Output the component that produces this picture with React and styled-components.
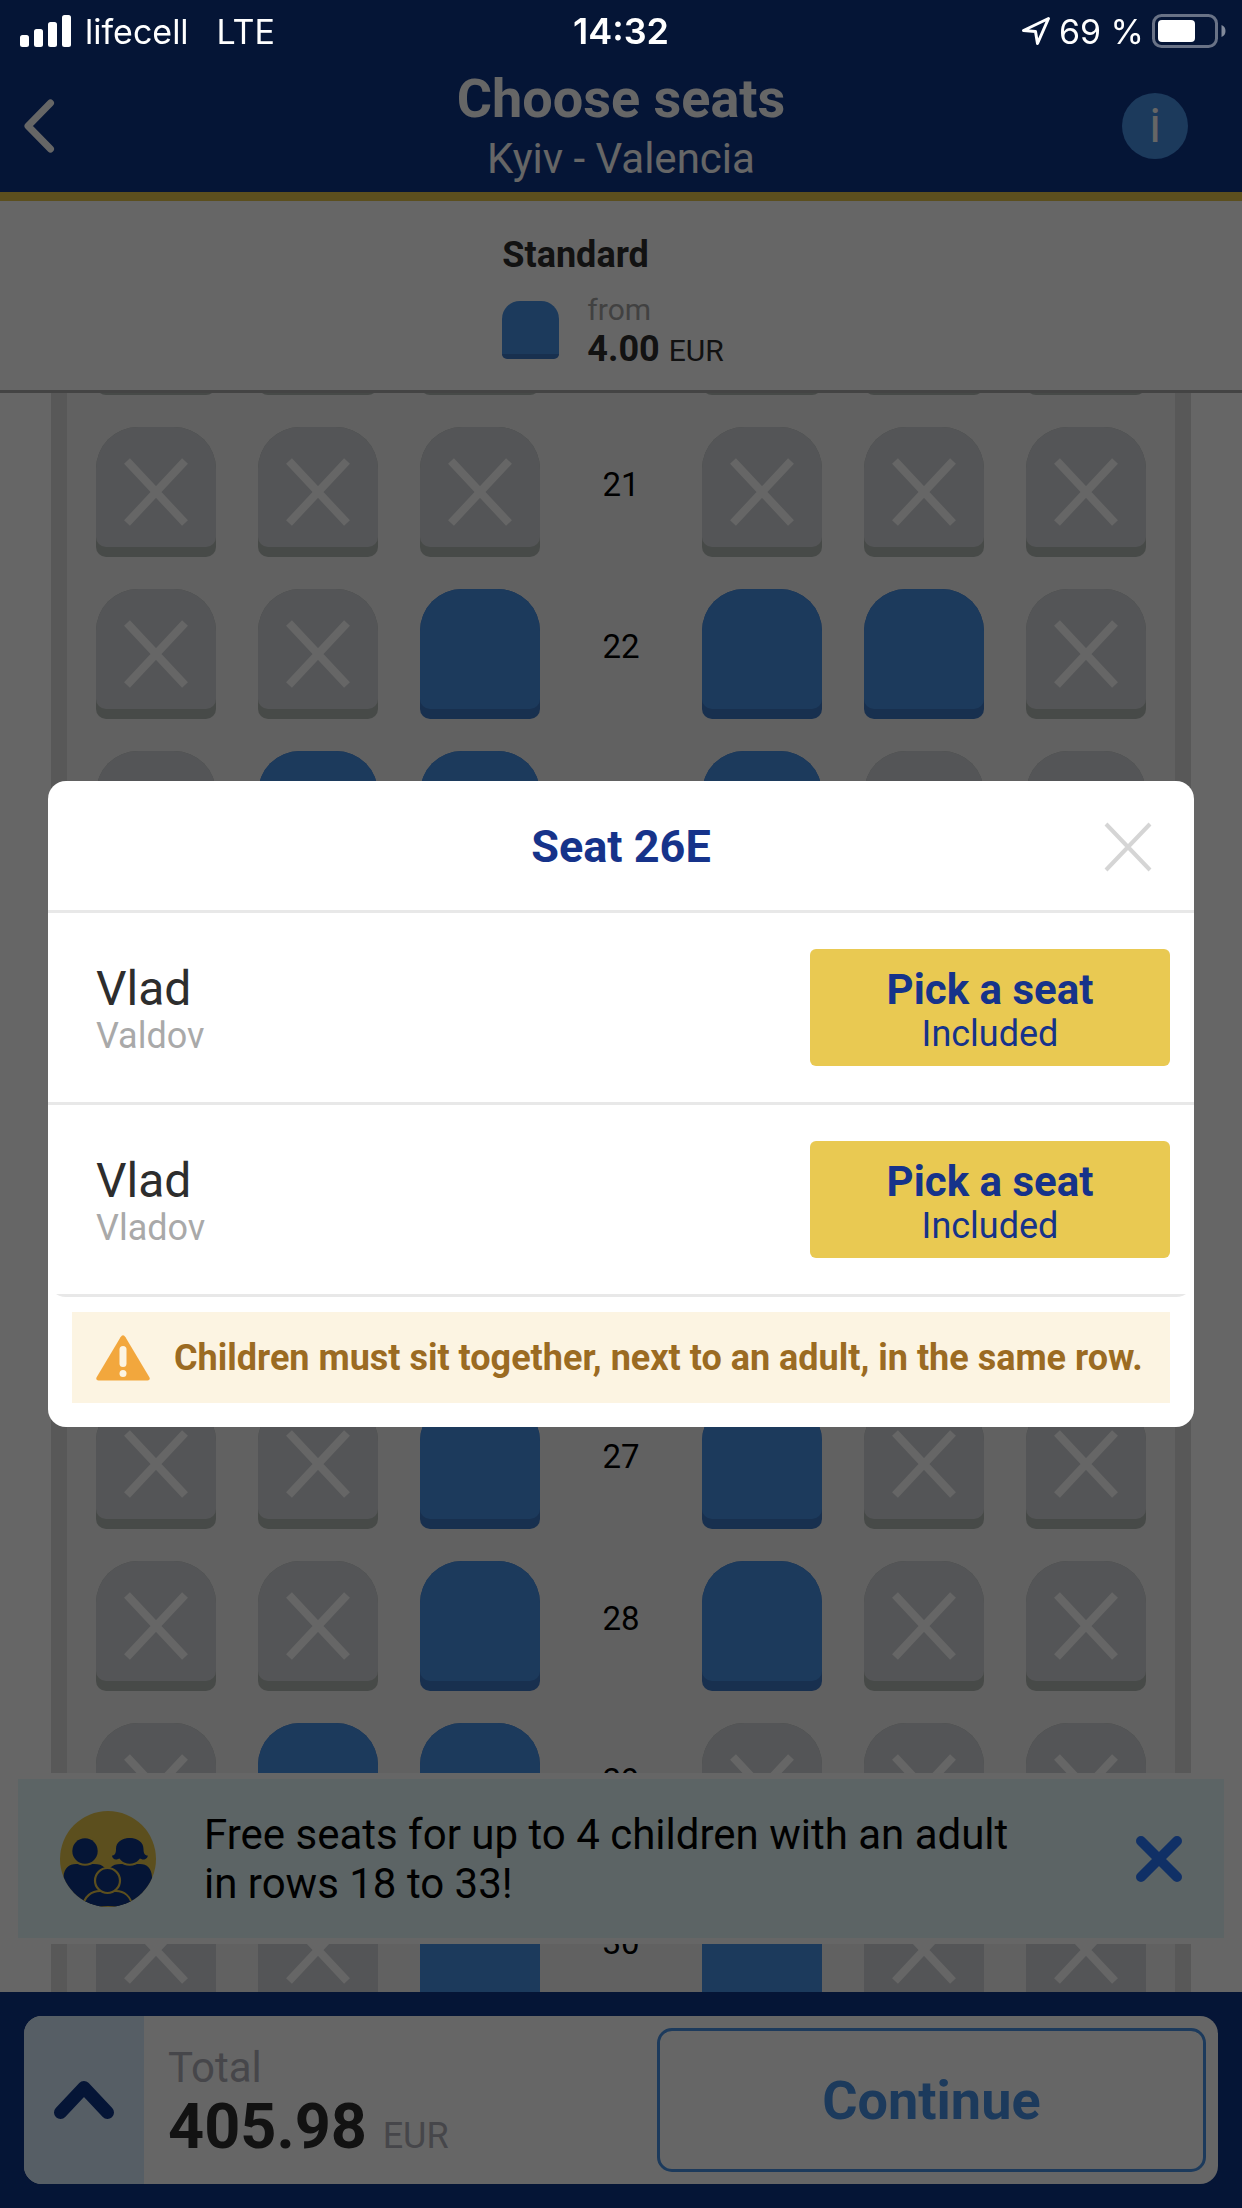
import React from 'react';
import styled, { createGlobalStyle } from 'styled-components';

const GlobalStyle = createGlobalStyle`
  * {
    box-sizing: border-box;
  }

  body {
    margin: 0;
    font-family: Roboto, 'Liberation Sans', sans-serif;
    background: #ffffff;
  }

  button {
    padding: 0;
    border: none;
    background: none;
    font-family: inherit;
    cursor: pointer;
  }

  svg {
    display: block;
    flex-shrink: 0;
  }
`;

const Page = styled.div`
  display: flex;
  flex-direction: column;
  height: 100vh;
  overflow: hidden;
`;

/* header */

const Header = styled.header`
  background: #0e3588;
  border-bottom: 9px solid #e6c54b;
`;

const StatusBar = styled.div`
  position: relative;
  z-index: 3;
  display: grid;
  grid-template-columns: 1fr auto 1fr;
  align-items: center;
  height: 60px;
  padding: 2px 16px 0;
  color: #ffffff;
  font-family: Inter, Roboto, sans-serif;
  font-size: 34px;
`;

const StatusGroup = styled.div`
  display: flex;
  align-items: center;
  gap: ${({ $gap }) => $gap}px;
  padding-left: 4px;
  justify-content: ${({ $end }) => ($end ? 'flex-end' : 'flex-start')};
`;

const Carrier = styled.span`
  margin-right: 14px;
`;

const Clock = styled.span`
  font-size: 36px;
  font-weight: 600;
`;

const TitleBar = styled.div`
  display: grid;
  grid-template-columns: 1fr auto 1fr;
  align-items: center;
  height: 132px;
  padding: 0 54px 0 20px;
  color: #ffffff;
`;

const Titles = styled.div`
  padding: 2px 0 0 34px;
  text-align: center;
`;

const Title = styled.h1`
  margin: 0;
  font-size: 54px;
  line-height: 64px;
  font-weight: 700;
`;

const Route = styled.p`
  margin: 0;
  font-size: 42px;
  line-height: 56px;
`;

const BackButton = styled.button`
  justify-self: start;
  color: #ffffff;
`;

const InfoButton = styled.button`
  justify-self: end;
  width: 66px;
  height: 66px;
  border-radius: 50%;
  background: #4691e6;
  color: #ffffff;
  font-size: 48px;
  line-height: 66px;
`;

/* price legend */

const Legend = styled.section`
  display: flex;
  flex-direction: column;
  align-items: center;
  padding: 30px 16px 21px 0;
  border-bottom: 3px solid #aaaaaa;
  background: #ffffff;
  color: #2d2d2d;
`;

const LegendName = styled.h2`
  margin: 0 0 12px;
  font-size: 36px;
  line-height: 48px;
  font-weight: 700;
`;

const LegendPrice = styled.div`
  display: flex;
  align-items: center;
  gap: 28px;
`;

const Swatch = styled.span`
  width: 57px;
  height: 58px;
  border-bottom: 5px solid #3e78c5;
  border-radius: 18px 18px 5px 5px;
  background: #4691e6;
`;

const From = styled.div`
  color: #a4a4a4;
  font-size: 30px;
  line-height: 38px;
`;

const Price = styled.div`
  font-size: 36px;
  line-height: 40px;
`;

const Currency = styled.span`
  font-size: 30px;
  line-height: 1;
`;

/* seat map */

const MapArea = styled.main`
  position: relative;
  flex: 1;
  min-height: 0;
  padding: 0 51px;
  overflow: hidden;
  background: #ffffff;
`;

const Cabin = styled.div`
  display: flex;
  flex-direction: column;
  align-items: center;
  gap: 32px;
  margin-top: -128px;
  padding-bottom: 32px;
  border: solid #dcdcdc;
  border-width: 0 16px;
  background: #f2f2f2;
`;

const SeatRow = styled.div`
  display: grid;
  grid-template-columns: repeat(3, 120px) 78px repeat(3, 120px);
  gap: 42px;
`;

const RowNumber = styled.span`
  font-size: 33px;
  line-height: 116px;
  text-align: center;
  color: #000000;
`;

const SeatButton = styled.button`
  height: 130px;
  border-radius: 42px 42px 10px 10px;
  background: ${({ $free }) => ($free ? '#3e78c5' : '#b2b9b4')};
`;

const SeatTop = styled.span`
  display: flex;
  align-items: center;
  justify-content: center;
  height: 120px;
  margin-bottom: 10px;
  padding-top: 10px;
  border-radius: 42px 42px 10px 10px;
  background: ${({ $free }) => ($free ? '#4691e6' : '#d2d5d9')};
`;

const Banner = styled.aside`
  position: absolute;
  left: 0;
  right: 0;
  bottom: 48px;
  padding: 6px 18px;
  background: #ffffff;
`;

const BannerBody = styled.div`
  display: flex;
  align-items: center;
  min-height: 159px;
  padding: 0 42px;
  background: #e6fafc;
`;

const BannerText = styled.p`
  flex: 1;
  margin: 0 90px 0 48px;
  font-size: 42px;
  line-height: 49px;
  color: #000000;
`;

/* footer */

const Footer = styled.footer`
  padding: 24px;
  background: #0e3588;
`;

const TotalCard = styled.div`
  display: flex;
  height: 168px;
  border-radius: 18px;
  overflow: hidden;
  background: #ffffff;
`;

const ExpandButton = styled.button`
  display: flex;
  align-items: center;
  justify-content: center;
  width: 120px;
  background: #d7ebfd;
`;

const Total = styled.div`
  flex: 1;
  align-self: center;
  padding-left: 24px;
  color: #b0b0b8;
`;

const TotalLabel = styled.div`
  font-size: 42px;
  line-height: 54px;
`;

const TotalValue = styled.div`
  font-size: 63px;
  line-height: 64px;

  b {
    color: #2d2d2d;
  }

  span {
    font-size: 36px;
    line-height: 1;
  }
`;

const ContinueButton = styled.button`
  width: 46%;
  margin: 12px;
  border: 3px solid #4691e6;
  border-radius: 15px;
  color: #4691e6;
  font-size: 54px;
  font-weight: 700;
`;

/* dialog */

const Overlay = styled.div`
  position: fixed;
  inset: 0;
  z-index: 2;
  display: flex;
  align-items: center;
  padding: 0 48px;
  background: rgba(0, 0, 0, 0.6);
`;

const Dialog = styled.div`
  flex: 1;
  padding-bottom: 24px;
  border-radius: 18px;
  background: #ffffff;
`;

const DialogHeader = styled.div`
  display: grid;
  grid-template-columns: 1fr auto 1fr;
  align-items: center;
  padding: 36px 42px 33px;
  border-bottom: 3px solid #e8e8e8;
`;

const DialogTitle = styled.h2`
  grid-column: 2;
  margin: 0;
  font-size: 45px;
  line-height: 60px;
  font-weight: 700;
  color: #16338a;
`;

const CloseButton = styled.button`
  justify-self: end;
`;

const Passengers = styled.ul`
  margin: 0;
  padding: 0;
  list-style: none;
  border-radius: 0 0 18px 18px;
  overflow: hidden;
`;

const Passenger = styled.li`
  display: flex;
  align-items: center;
  justify-content: space-between;
  padding: 36px 24px 36px 48px;
  border-bottom: 3px solid #e8e8e8;
`;

const PassengerName = styled.div`
  padding-top: 2px;
`;

const FirstName = styled.div`
  font-size: 48px;
  line-height: 54px;
  color: #2d2d2d;
`;

const LastName = styled.div`
  font-size: 36px;
  line-height: 40px;
  color: #a9a9a9;
`;

const PickButton = styled.button`
  display: flex;
  flex-direction: column;
  align-items: center;
  justify-content: center;
  width: 360px;
  height: 117px;
  padding-top: 2px;
  border-radius: 6px;
  background: #e9c952;
  color: #16338a;
  font-size: 36px;
  line-height: 38px;

  b {
    font-size: 42px;
    line-height: 50px;
  }
`;

const Warning = styled.div`
  display: flex;
  align-items: center;
  gap: 24px;
  min-height: 91px;
  margin: 15px 24px 0;
  padding: 0 24px;
  background: #fcf4e2;
  color: #9b6b22;
  font-size: 36px;
  font-weight: 700;
`;

const rows = [
  { number: 20, seats: 'xxxxxx' },
  { number: 21, seats: 'xxxxxx' },
  { number: 22, seats: 'xxooox' },
  { number: 23, seats: 'xoooxx' },
  { number: 24, seats: 'xxooxx' },
  { number: 25, seats: 'xxooxx' },
  { number: 26, seats: 'xxooox' },
  { number: 27, seats: 'xxooxx' },
  { number: 28, seats: 'xxooxx' },
  { number: 29, seats: 'xooxxx' },
  { number: 30, seats: 'xxooxx' },
];

const passengers = [
  { first: 'Vlad', last: 'Valdov' },
  { first: 'Vlad', last: 'Vladov' },
];

const letters = 'ABCDEF';

const SignalIcon = () => (
  <svg width="51" height="32" viewBox="0 0 51 32" fill="#fff">
    <rect x="0" y="20" width="9" height="12" rx="2.5" />
    <rect x="14" y="14" width="9" height="18" rx="2.5" />
    <rect x="28" y="7" width="9" height="25" rx="2.5" />
    <rect x="42" y="0" width="9" height="32" rx="2.5" />
  </svg>
);

const LocationIcon = () => (
  <svg width="30" height="30" viewBox="0 0 30 30" fill="none" stroke="#fff" strokeWidth="3" strokeLinejoin="round">
    <path d="M27.5 2.5 2.5 14.5 14.5 15.5 16.5 27.5Z" />
  </svg>
);

const BatteryIcon = () => (
  <svg width="74" height="34" viewBox="0 0 74 34">
    <rect x="1.5" y="1.5" width="63" height="31" rx="8" fill="none" stroke="#fff" strokeOpacity="0.4" strokeWidth="3" />
    <rect x="6" y="6" width="37" height="22" rx="4" fill="#fff" />
    <path d="M69.500 11a6.500 6.500 0 0 1 0 12z" fill="#fff" fillOpacity="0.5" />
  </svg>
);

const CrossIcon = ({ width, height, color, stroke, cap = 'butt' }) => {
  const inset = stroke / 2;
  return (
    <svg width={width} height={height} viewBox={`0 0 ${width} ${height}`} stroke={color} strokeWidth={stroke} strokeLinecap={cap}>
      <path d={`M${inset} ${inset}L${width - inset} ${height - inset}M${width - inset} ${inset}L${inset} ${height - inset}`} />
    </svg>
  );
};

const FamilyIcon = () => (
  <svg width="96" height="96" viewBox="0 0 96 96">
    <clipPath id="family-circle">
      <circle cx="48" cy="48" r="48" />
    </clipPath>
    <g clipPath="url(#family-circle)" fill="#0e3588">
      <rect width="96" height="96" fill="#e6c54b" />
      <path d="M3.500 66C4 57 9 53 16 53H34C39 53 42 54 44.500 56.500L48 60V100H0Z" />
      <path d="M92 66C91.500 57 87 53 80 53H61C56 53 53 54 50.500 56.500L47 60V100H96Z" />
      <circle cx="25" cy="40" r="14.800" fill="#e6c54b" />
      <circle cx="69.700" cy="40" r="14.800" fill="#e6c54b" />
      <circle cx="25" cy="40" r="12.700" />
      <circle cx="69.700" cy="40" r="12.700" />
      <path d="M56 38C56 31 62 27 69.700 27S83.500 31 83.500 38C83.500 42 84.500 44.500 87.700 44.500C88 48 83 50 79.500 47L60 47C56 50 52 48 52 44.500C55 44.500 56 42 56 38Z" />
      <path d="M23 96C24 85 32 80 40 80H56C64 80 71 85 72.500 96Z" stroke="#e6c54b" strokeWidth="2" />
      <circle cx="47.500" cy="69.500" r="12.500" stroke="#e6c54b" strokeWidth="2.200" />
    </g>
  </svg>
);

const WarningIcon = () => (
  <svg width="54" height="46" viewBox="0 0 54 46">
    <path d="M24.500 2.200Q27-1.500 29.500 2.200L53.500 42.500Q54.500 45.500 51.500 45.500H2.500Q-.5 45.500 .5 42.500Z" fill="#f2a73d" />
    <rect x="23.500" y="11" width="7" height="21" rx="3.500" fill="#fcf4e2" />
    <circle cx="27" cy="38.500" r="3.500" fill="#fcf4e2" />
  </svg>
);

const Seat = ({ free, name }) => (
  <SeatButton type="button" $free={free} disabled={!free} aria-label={`Seat ${name}`}>
    <SeatTop $free={free}>
      {!free && <CrossIcon width={66} height={70} color="#ffffff" stroke={8} />}
    </SeatTop>
  </SeatButton>
);

const App = () => {
  return (
    <>
      <GlobalStyle />
      <Page>
        <Header>
          <StatusBar>
            <StatusGroup $gap={14}>
              <SignalIcon />
              <Carrier>lifecell</Carrier>
              <span>LTE</span>
            </StatusGroup>
            <Clock>14:32</Clock>
            <StatusGroup $gap={8} $end>
              <LocationIcon />
              <span>69 %</span>
              <BatteryIcon />
            </StatusGroup>
          </StatusBar>
          <TitleBar>
            <BackButton type="button" aria-label="Back">
              <svg width="38" height="54" viewBox="0 0 38 54" fill="none" stroke="#fff" strokeWidth="7" strokeLinecap="round" strokeLinejoin="round">
                <path d="M30.500 4 8 27 30.500 50" />
              </svg>
            </BackButton>
            <Titles>
              <Title>Choose seats</Title>
              <Route>Kyiv - Valencia</Route>
            </Titles>
            <InfoButton type="button" aria-label="Information">i</InfoButton>
          </TitleBar>
        </Header>

        <Legend>
          <div>
            <LegendName>Standard</LegendName>
            <LegendPrice>
              <Swatch />
              <div>
                <From>from</From>
                <Price><b>4.00</b> <Currency>EUR</Currency></Price>
              </div>
            </LegendPrice>
          </div>
        </Legend>

        <MapArea>
          <Cabin>
            {rows.map(({ number, seats }) => (
              <SeatRow key={number}>
                {[0, 1, 2].map((i) => (
                  <Seat key={i} name={number + letters[i]} free={seats[i] === 'o'} />
                ))}
                <RowNumber>{number}</RowNumber>
                {[3, 4, 5].map((i) => (
                  <Seat key={i} name={number + letters[i]} free={seats[i] === 'o'} />
                ))}
              </SeatRow>
            ))}
          </Cabin>
          <Banner>
            <BannerBody>
              <FamilyIcon />
              <BannerText>Free seats for up to 4 children with an adult in rows 18 to 33!</BannerText>
              <button type="button" aria-label="Dismiss">
                <CrossIcon width={46} height={46} color="#2a78ff" stroke={10} cap="round" />
              </button>
            </BannerBody>
          </Banner>
        </MapArea>

        <Footer>
          <TotalCard>
            <ExpandButton type="button" aria-label="Show details">
              <svg width="62" height="40" viewBox="0 0 62 40" fill="none" stroke="#0e3588" strokeWidth="13" strokeLinecap="round" strokeLinejoin="round">
                <path d="M7.500 32.500 31 7.500 54.500 32.500" />
              </svg>
            </ExpandButton>
            <Total>
              <TotalLabel>Total</TotalLabel>
              <TotalValue><b>405.98</b> <span>EUR</span></TotalValue>
            </Total>
            <ContinueButton type="button">Continue</ContinueButton>
          </TotalCard>
        </Footer>
      </Page>

      <Overlay>
        <Dialog role="dialog" aria-labelledby="seat-title">
          <DialogHeader>
            <DialogTitle id="seat-title">Seat 26E</DialogTitle>
            <CloseButton type="button" aria-label="Close">
              <CrossIcon width={48} height={50} color="#d5d5d5" stroke={4} />
            </CloseButton>
          </DialogHeader>
          <Passengers>
            {passengers.map(({ first, last }) => (
              <Passenger key={last}>
                <PassengerName>
                  <FirstName>{first}</FirstName>
                  <LastName>{last}</LastName>
                </PassengerName>
                <PickButton type="button">
                  <b>Pick a seat</b>
                  Included
                </PickButton>
              </Passenger>
            ))}
          </Passengers>
          <Warning>
            <WarningIcon />
            Children must sit together, next to an adult, in the same row.
          </Warning>
        </Dialog>
      </Overlay>
    </>
  );
};

export default App;
